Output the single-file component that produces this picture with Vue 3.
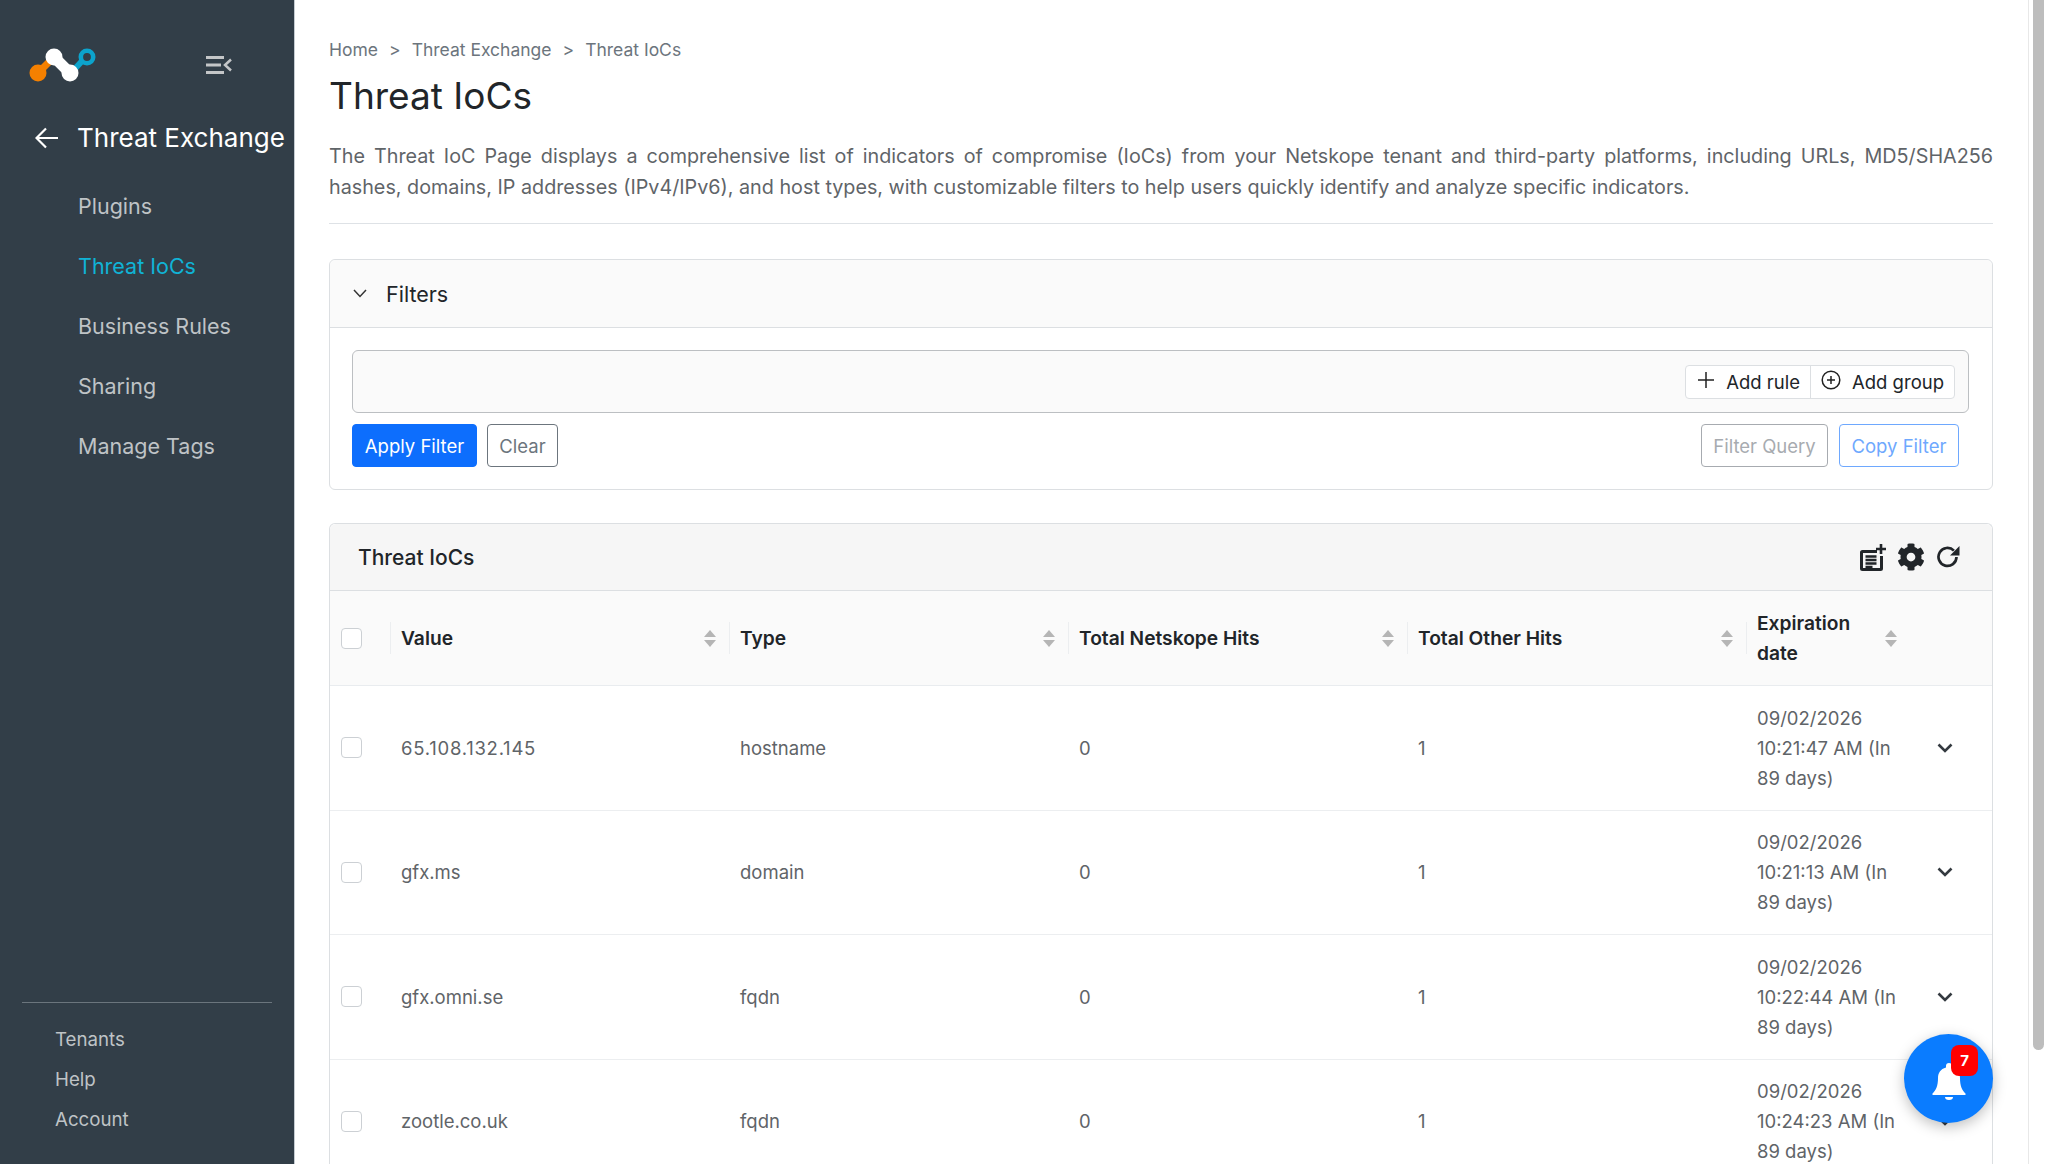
<template>
  <div class="app">
    <aside class="sidebar">
      <div class="brand">
        <svg class="logo" viewBox="0 0 72 36" width="72" height="36">
          <path d="M9 26 L21 14" stroke="#f58000" stroke-width="7" />
          <circle cx="9" cy="26" r="8.500" fill="#f58000" />
          <path d="M42 26 L54 13" stroke="#0ca3cc" stroke-width="6" />
          <circle cx="58" cy="10" r="6.200" fill="none" stroke="#0ca3cc" stroke-width="4.600" />
          <path d="M25 10 L41 26" stroke="#fff" stroke-width="11" />
          <circle cx="25" cy="10" r="8.500" fill="#fff" />
          <circle cx="41" cy="26" r="8.500" fill="#fff" />
        </svg>
        <svg class="collapse" viewBox="0 0 26 18" width="26" height="18">
          <path d="M0 1.500H18M0 9H15M0 16.500H18" stroke="#c4c6c8" stroke-width="3" />
          <path d="M25 3.500 L19 9 L25 14.500" fill="none" stroke="#c4c6c8" stroke-width="2.500" />
        </svg>
      </div>
      <div class="module">
        <svg viewBox="0 0 24 22" width="24" height="22">
          <path d="M23 11H2M11 1.500 L1.500 11 L11 20.500" fill="none" stroke="#fff" stroke-width="2.200" />
        </svg>
        <span>Threat Exchange</span>
      </div>
      <nav class="nav">
        <a v-for="item in navItems" :key="item" :class="{ active: item === 'Threat IoCs' }">{{ item }}</a>
      </nav>
      <div class="side-foot">
        <a v-for="item in footItems" :key="item">{{ item }}</a>
      </div>
    </aside>

    <main class="main">
      <div class="crumbs">
        <span>Home</span><i>&gt;</i><span>Threat Exchange</span><i>&gt;</i><span>Threat IoCs</span>
      </div>
      <h1>Threat IoCs</h1>
      <p class="desc">The Threat IoC Page displays a comprehensive list of indicators of compromise (IoCs) from your Netskope tenant and third-party platforms, including URLs, MD5/SHA256 hashes, domains, IP addresses (IPv4/IPv6), and host types, with customizable filters to help users quickly identify and analyze specific indicators.</p>

      <section class="card filters">
        <header class="filters-head">
          <svg viewBox="0 0 14 9" width="14" height="9">
            <path d="M1 1 L7 7.500 L13 1" fill="none" stroke="#333" stroke-width="1.500" />
          </svg>
          <span>Filters</span>
        </header>
        <div class="filters-body">
          <div class="query">
            <div class="query-btns">
              <button class="rule-btn">
                <svg viewBox="0 0 16 16" width="16" height="16"><path d="M8 0V16M0 8H16" stroke="#222" stroke-width="1.500" /></svg>
                Add rule
              </button>
              <button class="rule-btn">
                <svg viewBox="0 0 20 20" width="20" height="20">
                  <circle cx="10" cy="10" r="8.800" fill="none" stroke="#222" stroke-width="1.500" />
                  <path d="M10 6V14M6 10H14" stroke="#222" stroke-width="1.500" />
                </svg>
                Add group
              </button>
            </div>
          </div>
          <div class="filter-actions">
            <button class="btn primary">Apply Filter</button>
            <button class="btn clear">Clear</button>
            <div class="spacer"></div>
            <button class="btn muted">Filter Query</button>
            <button class="btn copy">Copy Filter</button>
          </div>
        </div>
      </section>

      <section class="card iocs">
        <header class="iocs-head">
          <span>Threat IoCs</span>
          <div class="tools">
            <svg viewBox="0 0 26 27" width="26" height="27">
              <path d="M17 6H2.500A2.500 2.500 0 0 0 0 8.500v16A2.500 2.500 0 0 0 2.500 27h18a2.500 2.500 0 0 0 2.500-2.500V12h-3v12H3V9h14z" fill="#212529" />
              <path d="M5.500 12.500h11M5.500 16h11M5.500 19.500h11M5.500 23h7" stroke="#212529" stroke-width="2.300" />
              <path d="M21 0v10M16 5h10" stroke="#212529" stroke-width="2.600" />
            </svg>
            <svg viewBox="0 0 512 512" width="28" height="28">
              <path d="M487.400 315.700l-42.600-24.600c4.300-23.200 4.300-47 0-70.200l42.600-24.600c4.900-2.800 7.100-8.600 5.500-14-11.100-35.600-30-67.800-54.700-94.600-3.800-4.100-10-5.100-14.800-2.300L380.800 110c-17.900-15.400-38.500-27.300-60.800-35.100V25.800c0-5.600-3.900-10.500-9.400-11.700-36.700-8.200-74.300-7.800-109.200 0-5.500 1.200-9.400 6.100-9.400 11.700V75c-22.200 7.900-42.800 19.800-60.800 35.100L88.700 85.500c-4.900-2.800-11-1.900-14.800 2.300-24.700 26.700-43.600 58.900-54.700 94.600-1.700 5.400.6 11.200 5.500 14L67.300 221c-4.300 23.200-4.300 47 0 70.200l-42.600 24.600c-4.900 2.800-7.100 8.600-5.500 14 11.100 35.600 30 67.800 54.700 94.600 3.800 4.100 10 5.100 14.800 2.300l42.600-24.600c17.900 15.400 38.500 27.300 60.800 35.100v49.200c0 5.600 3.900 10.500 9.400 11.700 36.700 8.200 74.300 7.800 109.200 0 5.500-1.200 9.400-6.100 9.400-11.700v-49.200c22.200-7.900 42.800-19.800 60.800-35.100l42.600 24.600c4.900 2.800 11 1.900 14.800-2.300 24.700-26.700 43.600-58.900 54.700-94.600 1.500-5.500-.7-11.300-5.600-14.100zM256 336c-44.100 0-80-35.900-80-80s35.900-80 80-80 80 35.900 80 80-35.900 80-80 80z" fill="#212529" />
            </svg>
            <svg viewBox="0 0 24 24" width="24" height="24">
              <path d="M20.500 12a9 9 0 1 1-2.600-6.400" fill="none" stroke="#212529" stroke-width="2.700" />
              <path d="M23.500 1v9.500H14z" fill="#212529" />
            </svg>
          </div>
        </header>
        <div class="table">
          <div class="row thead">
            <div class="cell check"><span class="box"></span></div>
            <div v-for="col in columns" :key="col" class="cell th">
              <span class="th-label">{{ col }}</span>
              <span class="sort"><i class="up"></i><i class="down"></i></span>
            </div>
            <div class="cell"></div>
          </div>
          <div v-for="row in rows" :key="row.value" class="row tbody">
            <div class="cell check"><span class="box"></span></div>
            <div class="cell" :class="{ ip: /^\d/.test(row.value) }">{{ row.value }}</div>
            <div class="cell">{{ row.type }}</div>
            <div class="cell">0</div>
            <div class="cell">1</div>
            <div class="cell date">{{ row.date }}</div>
            <div class="cell more">
              <svg viewBox="0 0 16 10" width="16" height="10">
                <path d="M1.500 1.500 L8 8 L14.500 1.500" fill="none" stroke="#343a40" stroke-width="2.600" />
              </svg>
            </div>
          </div>
        </div>
      </section>
    </main>

    <div class="scrollbar"><div class="thumb"></div></div>

    <div class="bell">
      <svg viewBox="0 0 34 38" width="34" height="38">
        <path d="M17 1a3 3 0 0 0-3 3v1.500C8.500 7 6 11 6 16c0 8-2 12-5.500 15.500V33h33v-1.500C30 28 28 24 28 16c0-5-2.500-9-8-10.500V4a3 3 0 0 0-3-3z" fill="#fff" />
        <path d="M13 35h8a4 3 0 0 1-8 0z" fill="#fff" />
      </svg>
      <span class="badge">7</span>
    </div>
  </div>
</template>

<script setup>
const navItems = ['Plugins', 'Threat IoCs', 'Business Rules', 'Sharing', 'Manage Tags']
const footItems = ['Tenants', 'Help', 'Account']
const columns = ['Value', 'Type', 'Total Netskope Hits', 'Total Other Hits', 'Expiration date']
const rows = [
  { value: '65.108.132.145', type: 'hostname', date: '09/02/2026 10:21:47 AM (In 89 days)' },
  { value: 'gfx.ms', type: 'domain', date: '09/02/2026 10:21:13 AM (In 89 days)' },
  { value: 'gfx.omni.se', type: 'fqdn', date: '09/02/2026 10:22:44 AM (In 89 days)' },
  { value: 'zootle.co.uk', type: 'fqdn', date: '09/02/2026 10:24:23 AM (In 89 days)' }
]
</script>

<style>
html, body {
  margin: 0;
  height: 100%;
  overflow: hidden;
  background: #fff;
}
</style>

<style scoped>
.app {
  display: flex;
  height: 1164px;
  overflow: hidden;
  position: relative;
  font-family: Inter, "Liberation Sans", sans-serif;
  color: #212529;
}
.sidebar {
  width: 294px;
  flex: none;
  box-sizing: content-box;
  background: #323e48;
  border-right: 1px solid #c5ccd2;
  display: flex;
  flex-direction: column;
}
.brand {
  display: flex;
  align-items: center;
  height: 36px;
  padding: 47px 0 0 29px;
}
.collapse {
  margin-left: 105px;
}
.module {
  display: flex;
  align-items: center;
  gap: 18px;
  margin-top: 34px;
  padding-left: 35px;
  height: 40px;
  color: #fff;
  font-size: 26px;
  white-space: nowrap;
}
.module svg {
  margin-top: 1px;
}
.nav {
  display: flex;
  flex-direction: column;
  gap: 26px;
  margin-top: 32px;
  padding-left: 78px;
  font-size: 21.500px;
  line-height: 34px;
  color: #bfc3c6;
}
.nav .active {
  color: #10b3d6;
}
.side-foot {
  margin: auto 22px 0;
  border-top: 1px solid #6b757d;
  padding: 22px 0 29px 33px;
  display: flex;
  flex-direction: column;
  gap: 10px;
  font-size: 18.700px;
  line-height: 30px;
  color: #bfc3c6;
}
.main {
  width: 1664px;
  flex: none;
  margin-left: 34px;
  padding-top: 36px;
}
.crumbs {
  display: flex;
  font-size: 17.500px;
  line-height: 28px;
  color: #6c757d;
}
.crumbs i {
  font-style: normal;
  margin: 0 11px;
}
h1 {
  margin: 8px 0 0;
  font-size: 37px;
  font-weight: 400;
  line-height: 48px;
  color: #212529;
}
.desc {
  margin: 21px 0 0;
  padding-bottom: 20px;
  border-bottom: 1px solid #dee2e6;
  font-size: 19.750px;
  line-height: 31px;
  text-align: justify;
  color: #5f6468;
}
.card {
  border: 1px solid #dcdfe2;
  border-radius: 6px;
}
.filters {
  margin-top: 35px;
}
.filters-head {
  display: flex;
  align-items: center;
  gap: 19px;
  height: 67px;
  padding-left: 23px;
  background: #fafafa;
  border-bottom: 1px solid #dcdfe2;
  border-radius: 6px 6px 0 0;
  font-size: 21.500px;
}
.filters-body {
  padding: 22px 22px 22px;
}
.query {
  height: 61px;
  border: 1px solid #bcbfc2;
  border-radius: 6px;
  background: #fafafa;
  display: flex;
  align-items: center;
  justify-content: flex-end;
  padding-right: 13px;
  margin-right: 1px;
}
.query-btns {
  display: flex;
  height: 32px;
  background: #fff;
  border: 1px solid #dcdfe2;
  border-radius: 4px;
}
.rule-btn {
  display: flex;
  align-items: center;
  gap: 12px;
  height: 100%;
  padding: 0 10px 0 12px;
  border: 0;
  background: none;
  font: inherit;
  font-size: 18.500px;
  color: #212529;
  white-space: nowrap;
}
.rule-btn svg {
  margin-top: -4px;
}
.rule-btn + .rule-btn {
  border-left: 1px solid #dcdfe2;
  gap: 11px;
  padding-left: 10px;
}
.filter-actions {
  display: flex;
  gap: 11px;
  margin-top: 11px;
}
.spacer {
  flex: 1;
}
.btn {
  height: 43px;
  border-radius: 4px;
  font: inherit;
  font-size: 18.500px;
  background: #fff;
  white-space: nowrap;
}
.primary {
  width: 125px;
  margin-right: -1px;
  background: #0d6efd;
  border: 1px solid #0d6efd;
  color: #fff;
}
.clear {
  width: 71px;
  border: 1px solid #6c757d;
  color: #6c757d;
}
.muted {
  width: 127px;
  border: 1px solid #a7abb0;
  color: #a7abb0;
}
.copy {
  width: 120px;
  margin-right: 11px;
  border: 1px solid #6ea8fe;
  color: #6ea8fe;
}
.iocs {
  margin-top: 33px;
  border-bottom: 0;
}
.iocs-head {
  display: flex;
  align-items: center;
  justify-content: space-between;
  height: 66px;
  padding: 0 32px 0 28px;
  background: #f6f6f6;
  border-bottom: 1px solid #dcdfe2;
  border-radius: 6px 6px 0 0;
  font-size: 21px;
  font-weight: 500;
}
.tools {
  display: flex;
  align-items: center;
  gap: 11px;
}
.row {
  display: grid;
  grid-template-columns: 60px 339px 339px 339px 339px 164px 82px;
  box-sizing: border-box;
}
.thead {
  height: 95px;
  background: #fafafa;
  border-bottom: 1px solid #e9ecef;
}
.tbody {
  height: 124.500px;
  border-bottom: 1px solid #eceef0;
  font-size: 18.500px;
  color: #5f6468;
}
.cell {
  display: flex;
  align-items: center;
  padding: 0 11px;
  min-width: 0;
  line-height: 30px;
}
.ip {
  letter-spacing: 0.750px;
}
.check {
  padding: 0 0 0 11px;
}
.box {
  width: 21px;
  height: 21px;
  box-sizing: border-box;
  background: #fff;
  border: 1px solid #ccd0d4;
  border-radius: 4px;
}
.th {
  position: relative;
  justify-content: space-between;
  font-size: 19.200px;
  font-weight: 600;
  color: #212529;
  padding-right: 13px;
}
.th::before {
  content: '';
  position: absolute;
  left: 0;
  top: 31px;
  height: 32px;
  border-left: 1px solid #eceef0;
}
.th-label {
  width: 100px;
  flex: 1;
}
.sort {
  display: flex;
  flex-direction: column;
  gap: 3px;
}
.sort i {
  width: 0;
  height: 0;
  border-left: 6px solid transparent;
  border-right: 6px solid transparent;
}
.sort .up {
  border-bottom: 7px solid #b5b5b5;
}
.sort .down {
  border-top: 7px solid #b5b5b5;
}
.date {
  padding-right: 0;
}
.more {
  padding-left: 27px;
}
.scrollbar {
  position: absolute;
  top: 0;
  right: 0;
  width: 20px;
  height: 100%;
  background: #fff;
  border-left: 1px solid #e8e8e8;
  box-sizing: border-box;
}
.thumb {
  width: 11px;
  height: 1050px;
  margin-left: 4px;
  background: #bdbdbd;
  border-radius: 0 0 6px 6px;
}
.bell {
  position: absolute;
  left: 1904px;
  top: 1034px;
  width: 89px;
  height: 89px;
  border-radius: 50%;
  background: #0a7cff;
  box-shadow: 0 4px 14px rgba(0, 0, 0, 0.25);
  display: flex;
  align-items: center;
  justify-content: center;
}
.bell svg {
  margin-top: 4px;
}
.badge {
  position: absolute;
  left: 47px;
  top: 11px;
  width: 27px;
  height: 31px;
  border-radius: 8px;
  background: #f00;
  color: #fff;
  font-size: 15px;
  font-weight: 700;
  display: flex;
  align-items: center;
  justify-content: center;
}
</style>
